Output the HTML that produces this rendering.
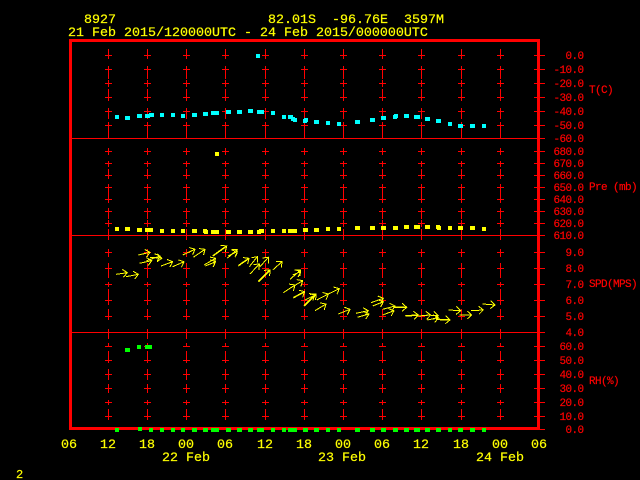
<!DOCTYPE html>
<html><head><meta charset="utf-8"><title>8927</title>
<style>
html,body{margin:0;padding:0;background:#000;width:640px;height:480px;overflow:hidden}
svg{display:block}
text{font-family:"Liberation Mono",monospace;white-space:pre}
.t{font-size:13.33px;fill:#ff0;stroke:#ff0;stroke-width:.2px}
.l{font-size:11px;letter-spacing:-.6px;fill:#f00;stroke:#f00;stroke-width:.2px;text-anchor:end}
.n{font-size:11px;letter-spacing:-.6px;fill:#f00;stroke:#f00;stroke-width:.2px}
</style></head><body>
<svg width="640" height="480" viewBox="0 0 640 480" xmlns="http://www.w3.org/2000/svg">
<defs>
<path id="c" fill="none" stroke="#f00" stroke-width="1" shape-rendering="crispEdges" d="M.5 49V59M.5 66V79M.5 80V87M.5 89V101M.5 108V119M.5 122V138M.5 148V155M.5 161V167M.5 169V179M.5 184V203M.5 208V219M.5 220V227M.5 229V240M.5 249V257M.5 263V278M.5 282V287M.5 289V305M.5 309V320M.5 329V339M.5 343V347M.5 351V363M.5 369V380M.5 384V393M.5 400V405M.5 409V420M-3 55.5H4M-3 69.5H4M-3 83.5H4M-3 97.5H4M-3 111.5H4M-3 125.5H4M-3 151.5H4M-3 163.5H4M-3 175.5H4M-3 187.5H4M-3 199.5H4M-3 211.5H4M-3 223.5H4M-3 252.5H4M-3 268.5H4M-3 284.5H4M-3 300.5H4M-3 316.5H4M-3 346.5H4M-3 360.5H4M-3 374.5H4M-3 388.5H4M-3 402.5H4M-3 416.5H4"/>
<marker id="h" markerUnits="userSpaceOnUse" markerWidth="14" markerHeight="14" refX="7" refY="7" orient="auto" overflow="visible">
<path d="M2.5 3L7 7L2.5 11" fill="none" stroke="#ff0" stroke-width="1" shape-rendering="crispEdges"/>
</marker>
</defs>
<rect width="640" height="480" fill="#000"/>
<use href="#c" x="108"/><use href="#c" x="147"/><use href="#c" x="186"/><use href="#c" x="225"/><use href="#c" x="265"/><use href="#c" x="304"/><use href="#c" x="343"/><use href="#c" x="382"/><use href="#c" x="421"/><use href="#c" x="461"/><use href="#c" x="500"/>
<path fill="none" stroke="#f00" stroke-width="1" shape-rendering="crispEdges" d="M72 138.5H545M72 235.5H545M72 332.5H545M534 55.5H545M534 69.5H545M534 83.5H545M534 97.5H545M534 111.5H545M534 125.5H545M534 151.5H545M534 163.5H545M534 175.5H545M534 187.5H545M534 199.5H545M534 211.5H545M534 223.5H545M534 252.5H545M534 268.5H545M534 284.5H545M534 300.5H545M534 316.5H545M534 346.5H545M534 360.5H545M534 374.5H545M534 388.5H545M534 402.5H545M534 416.5H545M534 429.5H545"/>
<path fill="#f00" d="M69 39H540V430H69ZM72 42V427H537V42Z" fill-rule="evenodd"/>

<path fill="#0ff" d="M256 54h4v4h-4zM115 115h4v4h-4zM125 116h5v4h-5zM137 114h5v4h-5zM145 114h5v4h-5zM149 113h5v4h-5zM160 113h4v4h-4zM171 113h4v4h-4zM181 114h4v4h-4zM192 113h5v4h-5zM203 112h5v4h-5zM211 111h8v4h-8zM226 110h5v4h-5zM237 110h5v4h-5zM248 109h5v4h-5zM257 110h7v4h-7zM271 111h4v4h-4zM282 115h4v4h-4zM288 115h5v4h-5zM291 117h4v4h-4zM293 118h4v4h-4zM303 119h4v4h-4zM304 118h4v4h-4zM314 120h5v4h-5zM326 121h4v4h-4zM337 122h4v4h-4zM355 120h5v4h-5zM370 118h5v4h-5zM381 116h5v4h-5zM393 115h4v4h-4zM394 114h4v4h-4zM404 114h5v4h-5zM414 115h6v4h-6zM425 117h5v4h-5zM436 119h5v4h-5zM448 122h4v4h-4zM458 124h5v4h-5zM470 124h5v4h-5zM482 124h4v4h-4z"/>
<path fill="#ff0" d="M215 152h4v4h-4zM115 227h4v4h-4zM125 227h5v4h-5zM137 228h5v4h-5zM145 228h8v4h-8zM160 229h4v4h-4zM171 229h4v4h-4zM181 229h4v4h-4zM192 229h5v4h-5zM203 229h4v4h-4zM204 230h4v4h-4zM211 230h8v4h-8zM226 230h5v4h-5zM237 230h5v4h-5zM248 230h5v4h-5zM257 230h4v4h-4zM259 229h5v4h-5zM271 229h4v4h-4zM282 229h4v4h-4zM288 229h9v4h-9zM303 228h5v4h-5zM314 228h5v4h-5zM326 227h4v4h-4zM337 227h4v4h-4zM355 226h5v4h-5zM370 226h5v4h-5zM381 226h5v4h-5zM393 226h5v4h-5zM404 225h5v4h-5zM414 225h6v4h-6zM425 225h5v4h-5zM436 225h4v4h-4zM437 226h4v4h-4zM448 226h4v4h-4zM458 226h5v4h-5zM470 226h5v4h-5zM482 227h4v4h-4z"/>
<path fill="#0f0" d="M125 348h5v4h-5zM137 345h4v4h-4zM145 345h7v4h-7zM115 428h4v4h-4zM138 427h4v4h-4zM149 428h4v4h-4zM160 428h4v4h-4zM171 428h4v4h-4zM181 428h4v4h-4zM192 428h5v4h-5zM203 428h5v4h-5zM211 428h8v4h-8zM226 428h5v4h-5zM237 428h5v4h-5zM248 428h5v4h-5zM257 428h7v4h-7zM271 428h4v4h-4zM282 428h4v4h-4zM288 428h9v4h-9zM303 428h5v4h-5zM314 428h5v4h-5zM326 428h4v4h-4zM337 428h4v4h-4zM355 428h5v4h-5zM370 428h5v4h-5zM381 428h5v4h-5zM393 428h5v4h-5zM404 428h5v4h-5zM414 428h6v4h-6zM425 428h5v4h-5zM436 428h5v4h-5zM448 428h4v4h-4zM458 428h5v4h-5zM470 428h5v4h-5zM482 428h4v4h-4z"/>

<g fill="none" stroke="#ff0" stroke-width="1" shape-rendering="crispEdges">
<path marker-end="url(#h)" d="M116 274.3L127.3 272.7"/>
<path marker-end="url(#h)" d="M126 276.7L138.3 274.3"/>
<path marker-end="url(#h)" d="M138.3 255L150 252.3"/>
<path marker-end="url(#h)" d="M139.3 263.3L151.7 260.7"/>
<path marker-end="url(#h)" d="M146.7 260.7L160 256"/>
<path marker-end="url(#h)" d="M150 257.3L161.7 258.3"/>
<path marker-end="url(#h)" d="M161 266L172.7 261.7"/>
<path marker-end="url(#h)" d="M172.7 266.7L184 261.7"/>
<path marker-end="url(#h)" d="M182.7 255L195 249.3"/>
<path marker-end="url(#h)" d="M193.3 257.3L205 249.3"/>
<path marker-end="url(#h)" d="M204 265L215.7 258.3"/>
<path marker-end="url(#h)" d="M205.3 266L215.7 261.7"/>
<path marker-end="url(#h)" stroke-width="1.5" d="M212.7 256L226.7 246"/>
<path marker-end="url(#h)" d="M227.3 258.3L237.3 249.3"/>
<path marker-end="url(#h)" d="M228 256L237.3 251.7"/>
<path marker-end="url(#h)" stroke-width="1.5" d="M238.3 265.7L249 258.3"/>
<path marker-end="url(#h)" d="M249.3 266.7L257.3 256.7"/>
<path marker-end="url(#h)" d="M250 274L259.3 264"/>
<path marker-end="url(#h)" d="M260 266.7L268.3 257.3"/>
<path marker-end="url(#h)" stroke-width="1.5" d="M258.3 281.7L270 270"/>
<path marker-end="url(#h)" d="M272.7 270L282 261.7"/>
<path marker-end="url(#h)" d="M290 279.3L300.7 270"/>
<path marker-end="url(#h)" d="M292.7 275L300.7 271.7"/>
<path marker-end="url(#h)" d="M283.3 292.7L295 285"/>
<path marker-end="url(#h)" d="M290 288.3L302.7 280.7"/>
<path marker-end="url(#h)" stroke-width="1.5" d="M293.3 297.7L304.7 291.7"/>
<path marker-end="url(#h)" stroke-width="1.5" d="M304 306L316 294"/>
<path marker-end="url(#h)" d="M305 300L315 295"/>
<path marker-end="url(#h)" d="M316.7 300L328.3 294"/>
<path marker-end="url(#h)" d="M328.3 294L339.3 288.7"/>
<path marker-end="url(#h)" d="M315 310.7L326 304"/>
<path marker-end="url(#h)" d="M338.3 314L350 309.3"/>
<path marker-end="url(#h)" d="M356 313.3L368.3 310.7"/>
<path marker-end="url(#h)" d="M357.3 317.3L369 314"/>
<path marker-end="url(#h)" d="M371 302.7L383.3 298.3"/>
<path marker-end="url(#h)" d="M372.7 306L383.3 301.7"/>
<path marker-end="url(#h)" d="M382.7 309.3L395 306"/>
<path marker-end="url(#h)" d="M382.7 315L394 310.7"/>
<path marker-end="url(#h)" stroke-width="1.5" d="M393.3 307.3L406.7 307.3"/>
<path marker-end="url(#h)" stroke-width="1.5" d="M405.3 316L418.3 315"/>
<path marker-end="url(#h)" d="M418.3 316L430.7 315"/>
<path marker-end="url(#h)" d="M427.3 320L438.3 317.7"/>
<path marker-end="url(#h)" d="M426.7 315L438.3 315.7"/>
<path marker-end="url(#h)" stroke-width="1.5" d="M436 319.3L450 320"/>
<path marker-end="url(#h)" d="M448.7 310L460.7 310.7"/>
<path marker-end="url(#h)" d="M459.3 315L471.7 315"/>
<path marker-end="url(#h)" d="M471 310.7L483.3 310"/>
<path marker-end="url(#h)" d="M482.7 304L495 305"/>
</g>

<text class="t" x="84" y="23">8927</text>
<text class="t" x="268" y="23">82.01S</text>
<text class="t" x="332" y="23">-96.76E</text>
<text class="t" x="404" y="23">3597M</text>
<text class="t" x="68" y="36">21 Feb 2015/120000UTC - 24 Feb 2015/000000UTC</text>

<text class="l" x="583.5" y="59">0.0</text>
<text class="l" x="583.5" y="73">-10.0</text>
<text class="l" x="583.5" y="87">-20.0</text>
<text class="l" x="583.5" y="101">-30.0</text>
<text class="l" x="583.5" y="115">-40.0</text>
<text class="l" x="583.5" y="129">-50.0</text>
<text class="l" x="583.5" y="142">-60.0</text>
<text class="l" x="583.5" y="155">680.0</text>
<text class="l" x="583.5" y="167">670.0</text>
<text class="l" x="583.5" y="179">660.0</text>
<text class="l" x="583.5" y="191">650.0</text>
<text class="l" x="583.5" y="203">640.0</text>
<text class="l" x="583.5" y="215">630.0</text>
<text class="l" x="583.5" y="227">620.0</text>
<text class="l" x="583.5" y="239">610.0</text>
<text class="l" x="583.5" y="256">9.0</text>
<text class="l" x="583.5" y="272">8.0</text>
<text class="l" x="583.5" y="288">7.0</text>
<text class="l" x="583.5" y="304">6.0</text>
<text class="l" x="583.5" y="320">5.0</text>
<text class="l" x="583.5" y="336">4.0</text>
<text class="l" x="583.5" y="350">60.0</text>
<text class="l" x="583.5" y="364">50.0</text>
<text class="l" x="583.5" y="378">40.0</text>
<text class="l" x="583.5" y="392">30.0</text>
<text class="l" x="583.5" y="406">20.0</text>
<text class="l" x="583.5" y="420">10.0</text>
<text class="l" x="583.5" y="433">0.0</text>

<text class="n" x="589" y="93">T(C)</text>
<text class="n" x="589" y="190">Pre (mb)</text>
<text class="n" x="589" y="287">SPD(MPS)</text>
<text class="n" x="589" y="384">RH(%)</text>

<text class="t" x="61" y="448">06</text>
<text class="t" x="100" y="448">12</text>
<text class="t" x="139" y="448">18</text>
<text class="t" x="178" y="448">00</text>
<text class="t" x="217" y="448">06</text>
<text class="t" x="257" y="448">12</text>
<text class="t" x="296" y="448">18</text>
<text class="t" x="335" y="448">00</text>
<text class="t" x="374" y="448">06</text>
<text class="t" x="413" y="448">12</text>
<text class="t" x="453" y="448">18</text>
<text class="t" x="492" y="448">00</text>
<text class="t" x="531" y="448">06</text>
<text class="t" x="162" y="461">22 Feb</text>
<text class="t" x="318" y="461">23 Feb</text>
<text class="t" x="476" y="461">24 Feb</text>
<text class="t" x="16" y="478" style="font-size:12px">2</text>
</svg>
</body></html>
